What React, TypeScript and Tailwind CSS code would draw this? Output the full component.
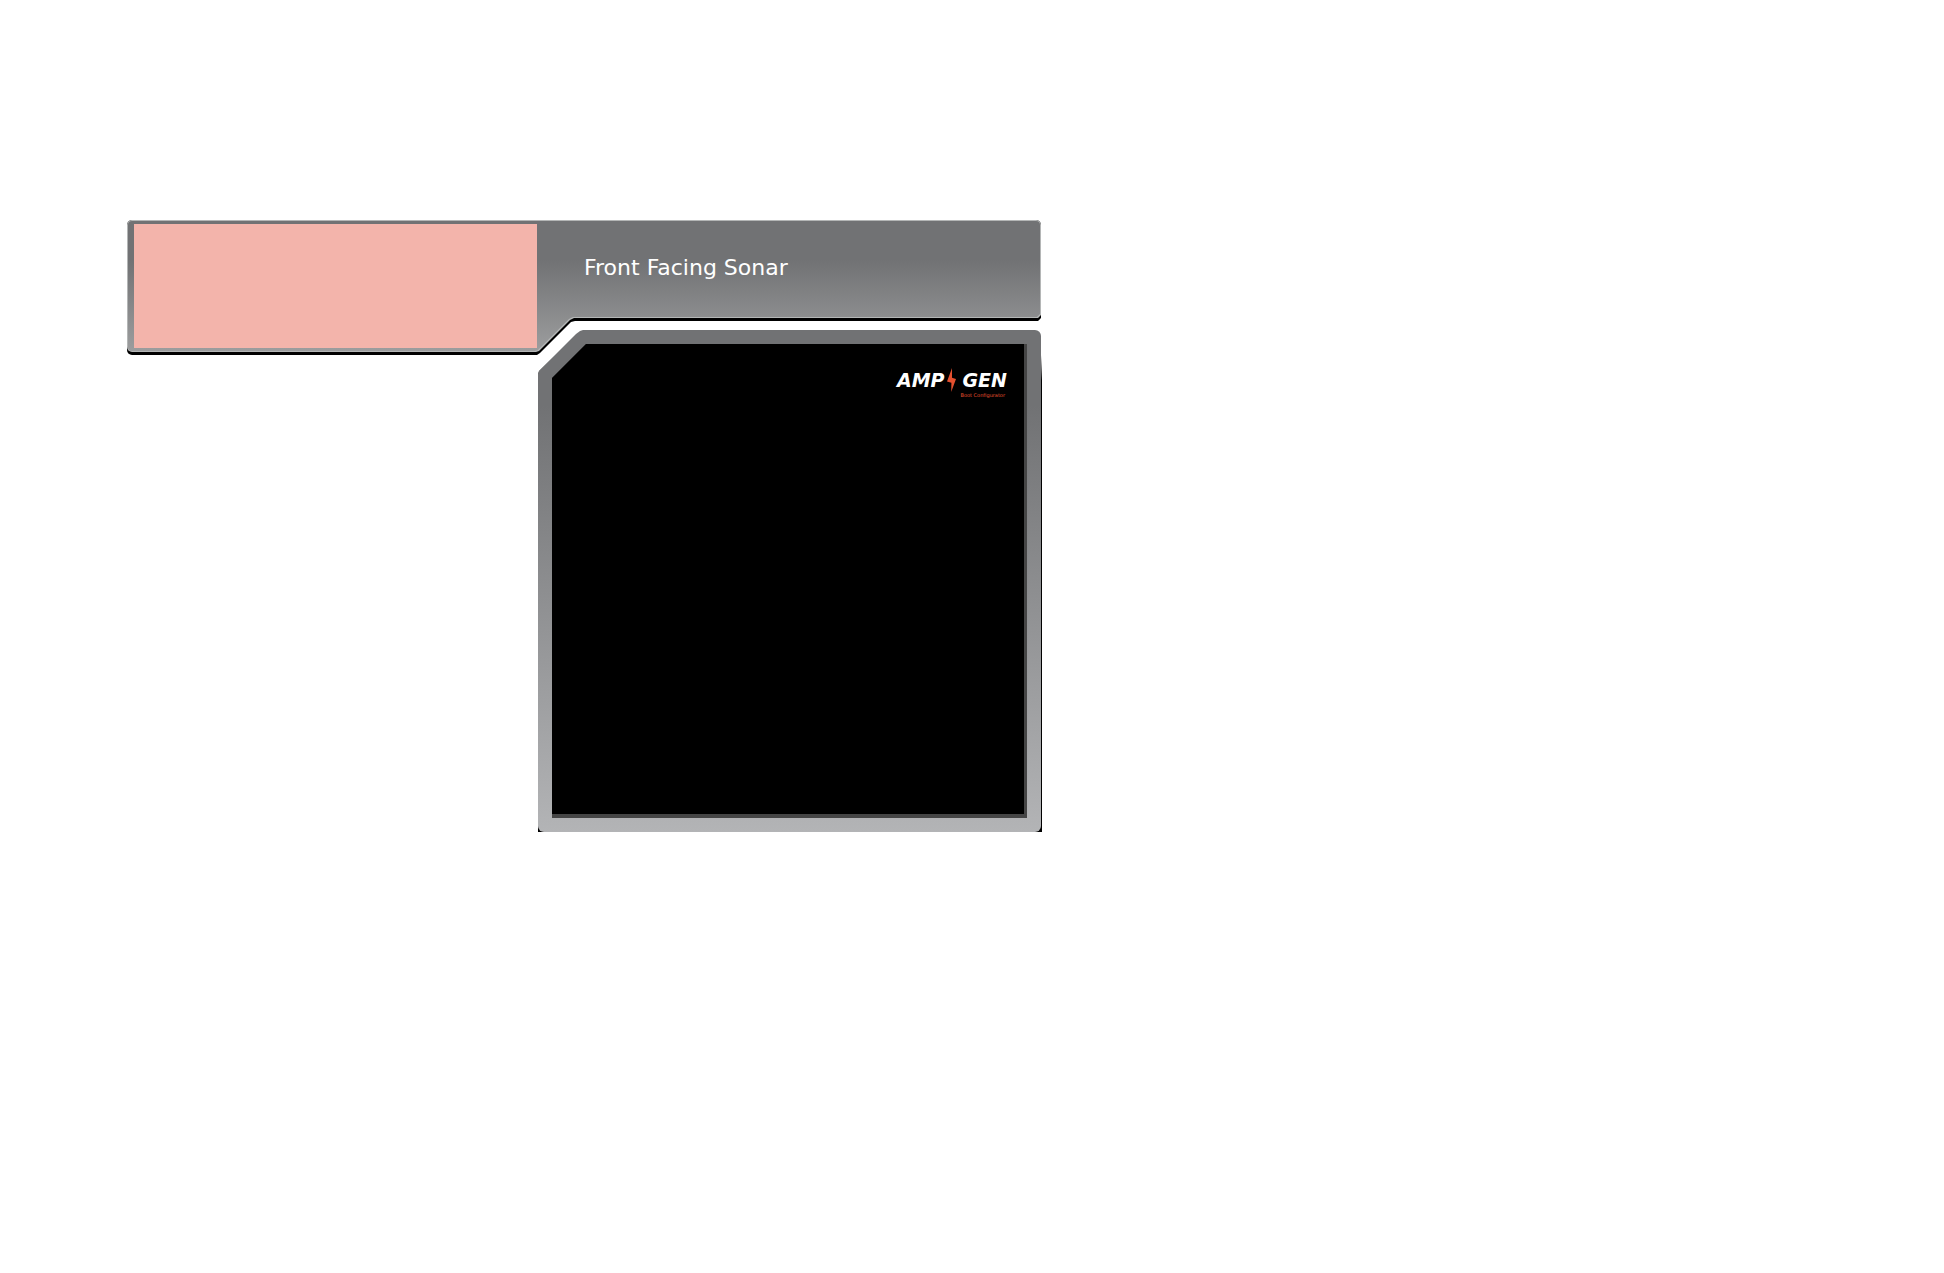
const FONT = "font-['DejaVu_Sans',sans-serif]";

function Bolt() {
  return (
    <svg viewBox="0 0 9 24" className="mr-[7px] ml-[2px] h-[24px] w-[9px]" aria-hidden="true">
      <path d="M5 0 L0 13.6 L4.4 14.8 L4.2 24 L9 11 L5 9.8 Z" fill="#e5502f" />
    </svg>
  );
}

function Logo() {
  return (
    <div className={`relative flex text-[19px] leading-[24px] font-bold text-white italic ${FONT}`}>
      <span>AMP</span>
      <Bolt />
      <span>GEN</span>
      <span className="absolute top-[24px] right-[2px] text-[5px] leading-[6px] font-normal whitespace-nowrap text-[#e5502f] not-italic">
        Boot Configurator
      </span>
    </div>
  );
}

function Header() {
  return (
    <header className="rounded-[5px] bg-black pb-[3px] [clip-path:polygon(0_0,100%_0,100%_98px,calc(100%-3px)_101px,448px_101px,444px_102px,413px_133px,410px_135px,0_135px)]">
      <div className="rounded-[5px] bg-[#b4b6b6] p-px [clip-path:polygon(0_0,100%_0,100%_95px,calc(100%-3px)_98px,447px_98px,443px_100px,412px_131px,409px_132px,0_132px)]">
        <div className="grid grid-cols-[409px_1fr] rounded-[4px] bg-linear-to-b from-[#717274] from-30% to-[#9c9d9e] [clip-path:polygon(0_0,100%_0,100%_93px,calc(100%-3px)_96px,445px_96px,441px_98px,410px_129px,407px_130px,0_130px)]">
          <div className="my-[3px] ml-[6px] h-[124px] bg-[#f3b4ab]" />
          <h1 className={`pt-[34px] pl-[47px] text-[22px] leading-[26px] text-white ${FONT}`}>Front Facing Sonar</h1>
        </div>
      </div>
    </header>
  );
}

function Display() {
  return (
    <main className="-mt-[25px] -mr-px ml-[411px] bg-linear-to-b from-transparent from-5% to-black to-10% pr-px [clip-path:polygon(0_44px,1px_41px,4px_38px,38px_4px,42px_1px,45px_0,100%_0,100%_100%,0_100%)]">
      <div className="rounded-[6px] bg-linear-to-b from-[#717274] from-15% to-[#b3b4b6] p-[14px]">
        <div className="bg-[#454545] pr-[3px] pb-[4px] [clip-path:polygon(0_34px,34px_0,100%_0,100%_100%,0_100%)]">
          <div className="flex h-[470px] items-start justify-end bg-black pt-[24px] pr-[17px]">
            <Logo />
          </div>
        </div>
      </div>
    </main>
  );
}

export default function App() {
  return (
    <div className="min-h-screen bg-white pt-[220px] pl-[127px]">
      <div className="w-[914px] max-w-full">
        <Header />
        <Display />
      </div>
    </div>
  );
}
